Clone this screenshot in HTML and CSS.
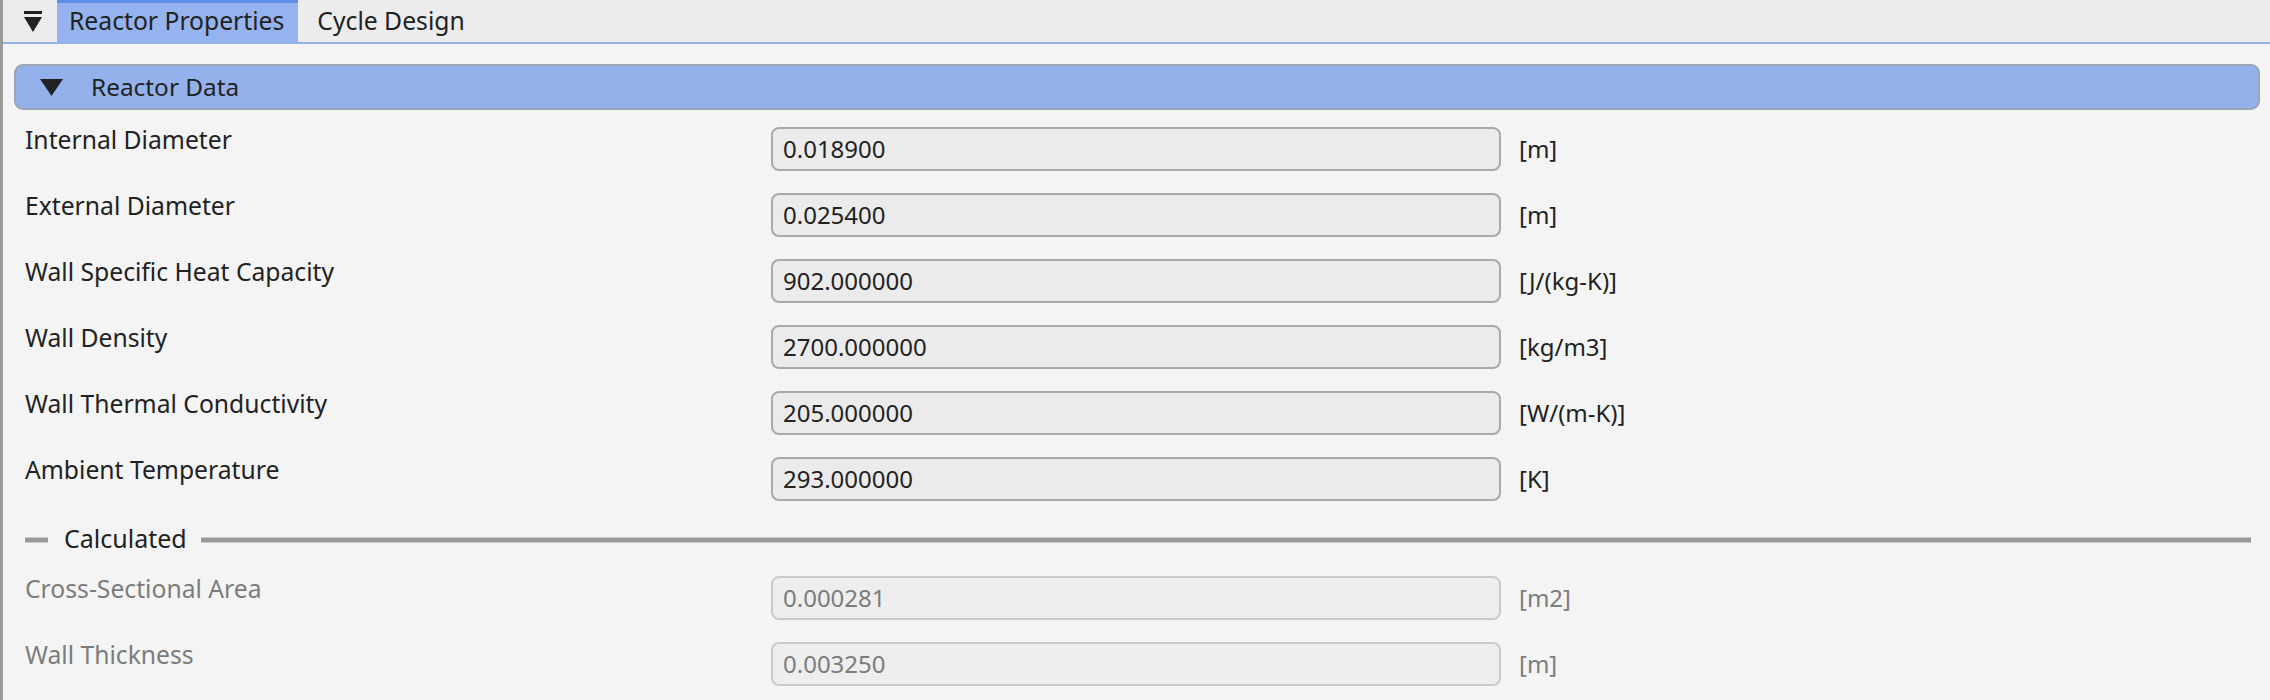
FILE: index.html
```html
<!DOCTYPE html>
<html>
<head>
<meta charset="utf-8">
<link rel="stylesheet" href="styles.css">
</head>
<body>
<div class="app">
  <div class="tabbar">
    <div class="menu-icon">
      <svg width="20" height="22" viewBox="0 0 20 22"><rect x="1" y="0" width="18" height="3" fill="#222"/><polygon points="1,6 19,6 10,21" fill="#222"/></svg>
    </div>
    <div class="tab active">Reactor Properties</div>
    <div class="tab">Cycle Design</div>
  </div>
  <div class="content">
    <div class="section-header">
      <svg class="hdr-tri" width="23" height="17" viewBox="0 0 23 17"><polygon points="0,0 23,0 11.5,17" fill="#222"/></svg>
      <span>Reactor Data</span>
    </div>
    <div class="form">
      <div class="label">Internal Diameter</div>
      <div class="field">0.018900</div>
      <div class="unit">[m]</div>
      <div class="label">External Diameter</div>
      <div class="field">0.025400</div>
      <div class="unit">[m]</div>
      <div class="label">Wall Specific Heat Capacity</div>
      <div class="field">902.000000</div>
      <div class="unit">[J/(kg-K)]</div>
      <div class="label">Wall Density</div>
      <div class="field">2700.000000</div>
      <div class="unit">[kg/m3]</div>
      <div class="label">Wall Thermal Conductivity</div>
      <div class="field">205.000000</div>
      <div class="unit">[W/(m-K)]</div>
      <div class="label">Ambient Temperature</div>
      <div class="field">293.000000</div>
      <div class="unit">[K]</div>
    </div>
    <div class="group-title">
      <div class="rule short"></div>
      <span>Calculated</span>
      <div class="rule long"></div>
    </div>
    <div class="form disabled">
      <div class="label">Cross-Sectional Area</div>
      <div class="field">0.000281</div>
      <div class="unit">[m2]</div>
      <div class="label">Wall Thickness</div>
      <div class="field">0.003250</div>
      <div class="unit">[m]</div>
    </div>
  </div>
</div>
</body>
</html>
```
FILE: styles.css
```css
html, body {
  margin: 0;
  padding: 0;
  height: 100%;
}
body {
  background: #f4f4f4;
  font-family: "Noto Sans", "Open Sans", sans-serif;
  font-size: 24px;
  color: #222;
  overflow: hidden;
}
.app {
  border-left: 3px solid #9a9a9a;
  height: 700px;
  box-sizing: border-box;
}
.tabbar {
  height: 42px;
  background: #ececec;
  border-bottom: 2px solid #93b1ec;
  display: flex;
  align-items: stretch;
}
.menu-icon {
  width: 54px;
  display: flex;
  align-items: flex-start;
  padding-left: 20px;
  padding-top: 11px;
  box-sizing: border-box;
}
.tab {
  display: flex;
  align-items: center;
  padding: 0 14px 0 12px;
  line-height: 24px;
  font-size: 24.7px;
  color: #222;
}
.tab.active {
  background: #95b3ee;
  border-top: 3px solid #5d8de6;
  padding-bottom: 3px;
}
.tab + .tab {
  padding-left: 19px;
}
.content {
  padding: 20px 10px 0 11px;
}
.section-header {
  height: 46px;
  box-sizing: border-box;
  background: #93b2ec;
  border: 2px solid #9ba3b5;
  border-radius: 9px;
  display: flex;
  align-items: center;
  padding-left: 24px;
  gap: 28px;
  line-height: 24px;
  font-size: 24.4px;
}
.form {
  display: grid;
  grid-template-columns: 728px 730px auto;
  grid-auto-rows: 44px;
  row-gap: 22px;
  column-gap: 18px;
  margin-left: 11px;
  margin-top: 17px;
}
.label {
  align-self: start;
  line-height: 24px;
  padding-top: 1px;
  font-size: 24.7px;
  white-space: nowrap;
}
.field {
  box-sizing: border-box;
  height: 44px;
  border: 2px solid #a9a9a9;
  border-radius: 8px;
  background: #ebebeb;
  display: flex;
  align-items: center;
  padding-left: 10px;
  line-height: 24px;
}
.unit {
  display: flex;
  align-items: center;
  line-height: 24px;
}
.group-title {
  display: flex;
  align-items: center;
  height: 28px;
  margin: 25px 9px 0 11px;
}
.group-title span {
  line-height: 24px;
  font-size: 25px;
  margin: -4px 14px 0 16px;
}
.rule {
  height: 4px;
  background: #999;
  border-top: 1px solid #c9c9c9;
  border-bottom: 1px solid #c9c9c9;
}
.rule.short {
  width: 23px;
}
.rule.long {
  flex: 1;
}
.form.disabled {
  margin-top: 22px;
  color: #7c7c7c;
}
.form.disabled .field {
  border-color: #cacaca;
  background: #eeeeee;
}
```
